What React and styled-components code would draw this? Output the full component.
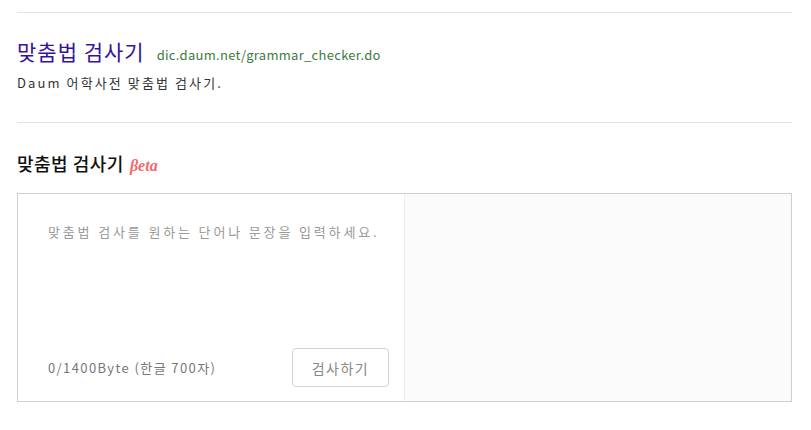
import React from 'react'
import styled, { createGlobalStyle } from 'styled-components'

const GlobalStyle = createGlobalStyle`
  body {
    margin: 0;
    background: #fff;
    font-family: "Noto Sans CJK KR", "Noto Sans", sans-serif;
  }
`

const App = () => {
  return (
    <Page>
      <GlobalStyle />
      <Result>
        <TitleRow>
          <Title>맞춤법 검사기</Title>
          <Url>dic.daum.net/grammar_checker.do</Url>
        </TitleRow>
        <Desc>Daum 어학사전 맞춤법 검사기.</Desc>
      </Result>
      <Heading>
        맞춤법 검사기<Beta>βeta</Beta>
      </Heading>
      <Checker>
        <InputPane>
          <Placeholder>맞춤법 검사를 원하는 단어나 문장을 입력하세요.</Placeholder>
          <Footer>
            <Counter>0/1400Byte (한글 700자)</Counter>
            <CheckButton>검사하기</CheckButton>
          </Footer>
        </InputPane>
        <ResultPane />
      </Checker>
    </Page>
  )
}

const Page = styled.div`
  width: 775px;
  padding: 12px 0 0 17px;
`

const Result = styled.section`
  border-top: 1px solid #e2e2e2;
  border-bottom: 1px solid #e2e2e2;
  padding: 24px 0 30px;
`

const TitleRow = styled.div`
  display: flex;
  align-items: baseline;
  gap: 12px;
`

const Title = styled.a`
  font-size: 21px;
  color: #33129c;
  line-height: 28px;
  letter-spacing: 1px;
`

const Url = styled.span`
  font-size: 13px;
  color: #3e7a3e;
  letter-spacing: 0.3px;
`

const Desc = styled.p`
  margin: 9px 0 0;
  font-size: 13px;
  color: #333;
  line-height: 18px;
  letter-spacing: 2.1px;
`

const Heading = styled.h3`
  margin: 27px 0 0;
  font-size: 18px;
  font-weight: 500;
  color: #111;
  line-height: 26px;
  letter-spacing: 0.5px;
  display: flex;
  align-items: baseline;
`

const Beta = styled.span`
  margin-left: 6px;
  font-family: "Liberation Serif", serif;
  font-style: italic;
  font-weight: bold;
  font-size: 16px;
  letter-spacing: 0;
  color: #f06a6a;
`

const Checker = styled.div`
  margin-top: 14px;
  height: 209px;
  box-sizing: border-box;
  border: 1px solid #cfcfcf;
  display: flex;
`

const InputPane = styled.div`
  width: 387px;
  border-right: 1px solid #eee;
  padding: 28px 15px 14px 30px;
  box-sizing: border-box;
  display: flex;
  flex-direction: column;
  justify-content: space-between;
`

const Placeholder = styled.div`
  font-size: 13px;
  color: #999;
  letter-spacing: 2.85px;
  white-space: nowrap;
`

const Footer = styled.div`
  display: flex;
  align-items: center;
  justify-content: space-between;
`

const Counter = styled.span`
  font-size: 13px;
  color: #777;
  letter-spacing: 1.4px;
`

const CheckButton = styled.button`
  width: 97px;
  height: 39px;
  background: #fff;
  border: 1px solid #d4d4d4;
  border-radius: 4px;
  font-family: inherit;
  font-size: 14px;
  color: #888;
  letter-spacing: 1.5px;
`

const ResultPane = styled.div`
  flex: 1;
  background: #fbfbfb;
`

export default App
